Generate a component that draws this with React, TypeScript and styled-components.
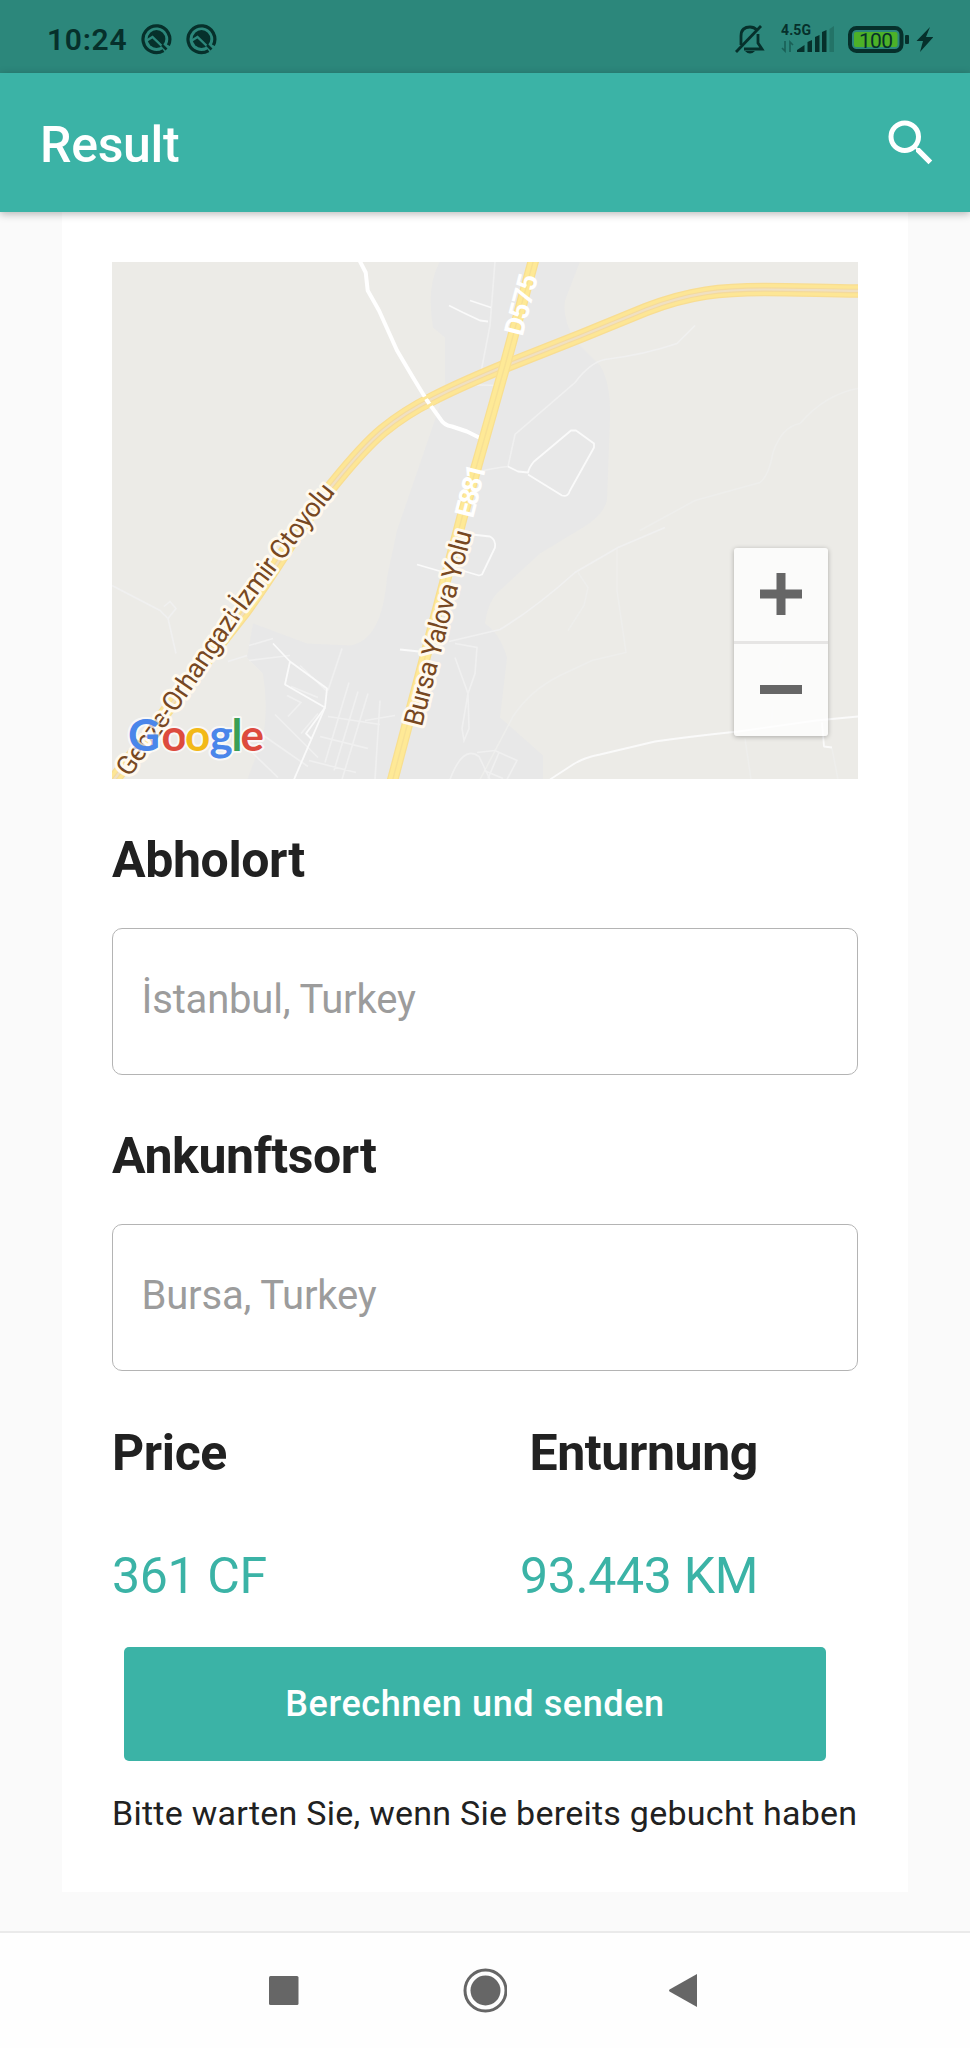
import React from 'react';
import styled, { createGlobalStyle } from 'styled-components';
import { MdSearch } from 'react-icons/md';

const Global = createGlobalStyle`
  * { box-sizing: border-box; }
  body { margin: 0; background: #fafafa; font-family: Roboto, sans-serif; color: #212121; }
`;

const Screen = styled.div`
  width: 970px;
  height: 2048px;
  display: flex;
  flex-direction: column;
  background: #fafafa;
  overflow: hidden;
`;

const StatusBar = styled.header`
  height: 73px;
  flex: none;
  display: flex;
  align-items: center;
  justify-content: space-between;
  padding: 5px 37px 0 47px;
  background: #2c877b;
  color: #06302b;
`;

const StatusGroup = styled.div`
  display: flex;
  align-items: center;
`;

const Clock = styled.span`
  width: 94px;
  font-size: 30px;
  font-weight: 600;
  line-height: 36px;
  letter-spacing: 0.7px;
  padding-top: 2px;
`;

const AppBar = styled.div`
  height: 139px;
  flex: none;
  display: flex;
  align-items: center;
  justify-content: space-between;
  padding: 0 29px 0 40px;
  background: #3bb3a6;
  box-shadow: 0 2px 8px rgba(0, 0, 0, 0.28);
  position: relative;
  z-index: 1;
`;

const Title = styled.h1`
  margin: 5px 0 0;
  color: #fff;
  font-size: 50px;
  font-weight: 500;
  line-height: 60px;
  letter-spacing: -0.3px;
`;

const SearchButton = styled.button`
  width: 60px;
  height: 60px;
  padding: 0;
  border: 0;
  background: none;
  color: #fff;
  font-size: 60px;
  line-height: 0;
`;

const Content = styled.main`
  flex: 1;
  padding: 0 62px 0 62px;
`;

const Card = styled.section`
  height: 1680px;
  padding: 49.5px 50px 0;
  background: #fff;
  display: flex;
  flex-direction: column;
`;

const MapFrame = styled.div`
  position: relative;
  height: 517.5px;
  flex: none;
  overflow: hidden;
`;

const ZoomControl = styled.div`
  position: absolute;
  right: 30px;
  bottom: 43px;
  width: 94px;
  height: 188px;
  display: flex;
  flex-direction: column;
  border-radius: 3px;
  background: rgba(255, 255, 255, 0.78);
  box-shadow: 0 1px 5px rgba(0, 0, 0, 0.28);
`;

const ZoomButton = styled.button`
  flex: 1;
  display: flex;
  align-items: center;
  justify-content: center;
  padding: 0;
  border: 0;
  background: none;
  & + & { border-top: 3px solid #e6e5e4; }
`;

const Heading = styled.h2`
  margin: 0;
  font-size: 50px;
  font-weight: 700;
  line-height: 60px;
  letter-spacing: -0.38px;
`;

const Field = styled.label`
  display: flex;
  flex-direction: column;
  gap: 38px;
  margin-top: 51px;
`;

const FieldBox = styled.div`
  height: 147px;
  padding: 47px 28.5px 0;
  border: 1.5px solid #b4b4b4;
  border-radius: 10px;
  font-size: 40px;
  line-height: 48px;
  letter-spacing: -0.18px;
  color: #9c9c9c;
`;

const Summary = styled.div`
  display: flex;
  justify-content: space-between;
  margin-top: 52px;
  padding-right: 100px;
`;

const Metric = styled.div<{ $end?: boolean }>`
  display: flex;
  flex-direction: column;
  gap: 63px;
  align-items: ${(p) => (p.$end ? 'flex-end' : 'flex-start')};
`;

const MetricValue = styled.span`
  font-size: 50px;
  line-height: 60px;
  color: #3bb3a6;
  letter-spacing: -0.35px;
`;

const SubmitButton = styled.button`
  width: 702px;
  height: 114px;
  margin: 41px 0 0 12px;
  flex: none;
  border: 0;
  border-radius: 5px;
  background: #3bb3a6;
  color: #fff;
  font-family: inherit;
  font-size: 36px;
  font-weight: 500;
  letter-spacing: 0.6px;
`;

const Note = styled.p`
  margin: 31px 0 0;
  font-size: 34px;
  line-height: 42px;
  white-space: nowrap;
  letter-spacing: 0.26px;
`;

const NavBar = styled.nav`
  height: 117px;
  flex: none;
  display: flex;
  justify-content: center;
  align-items: center;
  gap: 158px;
  padding-bottom: 2px;
  border-top: 2px solid #eaeaea;
  background: #fefefe;
`;

const halo = { paintOrder: 'stroke', strokeLinejoin: 'round' } as const;

const MOTORWAY =
  'M108 787 L172 703 L243 613 C280 563 300 522 333 484 C350 463 366 444 383 430 C400 416 417 406 433 398 C458 385 480 376 504 366 L580 336 L646 309 C690 292 722 289 765 289 C795 289 820 290 860 290.5';
const HIGHWAY = 'M534 258 L505 365 L483 443 L462 517 L392 782';

const MINOR = [
  'M449 305 L463 312 L480 320 L488 321',
  'M470 300 L491 307',
  'M508 466 L518 471 L528 472 Q529 467 534 461 L571 430 L576 430 L594 443 L594 447 L570 490 Q568 497 562 495 L528 474',
  'M472 534 L490 536 Q496 539 495 547 L482 574 L479 575 L462 570',
  'M417 564 L441 571',
  'M400 649 L419 651',
  'M290 661 L327 688 L325 707 L285 684 L290 661 L273 643',
  'M325 707 L306 733 L312 739',
  'M325 707 L294 779',
  'M550 779 L573 764 Q584 757 600 754 L655 741 Q690 736 738 731 L816 720 L858 716',
  'M822 722 L824 746 L832 747',
];

const FAINT = [
  'M495 261 L490 325 L479 382',
  'M480 471 Q491 468 508 466 L515 434 L575 382 Q590 362 605 359 Q645 354 677 343 L695 325',
  'M464 384 L498 385',
  'M112 585 L160 610 L168 618 L176 608 L170 601 L164 606 M168 618 L176 653',
  'M228 661 L247 655 M249 645 L273 638 M249 660 L290 655',
  'M300 665 L326 690 M291 686 L318 697 M287 695 L301 702 L288 716 M318 713 L301 733 M275 714 L318 757 M262 734 L308 766 M251 751 L278 777',
  'M349 682 L325 762 M358 691 L334 770 M368 693 L342 779 M342 648 L328 690 M328 716 L380 724 M320 736 L368 748 M309 760 L356 772 M380 700 L375 779 M365 720 L395 715',
  'M455 643 L477 647 L475 673 L468 693 L455 657 M468 693 L469 728 L464 740 L462 728 L468 693 M449 641 L500 629 Q535 608 575 572 L618 547 L665 527',
  'M477 752 L495 750 L517 760 L507 779 M484 770 L503 778 M499 752 L488 778',
  'M450 779 Q463 744 479 756 L490 779',
];

const FAINTEST = [
  'M578 572 L588 587 L584 605 L568 630',
  'M617 547 L617 590 L626 652 L592 660 L560 675 Q530 690 513 716 L480 779',
  'M640 530 L695 500 L760 482 Q769 475 773 452 Q782 426 800 423 Q825 394 858 388',
  'M786 653 L779 665 L783 680 M773 705 L771 728 M745 738 L751 779 M832 748 L838 779',
];

function RouteMap() {
  return (
    <svg width="746" height="517.5" viewBox="112 261.5 746 517.5" fill="none" fontFamily="Roboto, sans-serif">
      <defs>
        <path id="motorwayLabel" d="M129.5 777.5 L182 703.5 L243 614 L278 567 Q301 535 342 484" />
        <path id="highwayLabel" d="M421.7 727 L474 525" />
        <path id="d575" d="M522.5 336.5 L542 262" />
        <path id="e881" d="M473 518.5 L492 445" />
      </defs>
      <path d="M112 261H858V780H112Z" fill="#ecebe7" />
      <path
        fill="#e8e8e8"
        d="M440 261 Q426 285 433 327 L445 337 V390 L420 463 L397 530 L387 577 Q382 640 350 645 L307 643 L253 623 L247 657 L263 673 Q269 710 262 740 L247 780 H543 V755 L500 717 L507 657 Q500 633 485 623 Q488 600 500 590 L540 553 L583 527 Q603 515 607 500 L610 417 Q611 383 600 365 L575 340 Q562 318 565 300 L580 261Z"
      />
      <g stroke="#eeeeec" strokeWidth="1.5">
        {FAINTEST.map((d) => <path key={d} d={d} />)}
      </g>
      <g stroke="#f0f0f0" strokeWidth="1.6">
        {FAINT.map((d) => <path key={d} d={d} />)}
      </g>
      <g stroke="#fafafa" strokeWidth="1.8" strokeLinejoin="round">
        {MINOR.map((d) => <path key={d} d={d} />)}
      </g>
      <path d={MOTORWAY} stroke="#f8dd92" strokeWidth="13.5" />
      <path d={MOTORWAY} stroke="#fde695" strokeWidth="11" />
      <path d={MOTORWAY} stroke="#f4da9c" strokeWidth="4.4" />
      <path d={MOTORWAY} stroke="#f0e0c2" strokeWidth="2.2" />
      <path
        d="M359 259 L365.7 272 L367.7 290 L379 310 L397 350 L413 377 L427 400 L440 418 Q444 425 452 426 L467 431 L481 438"
        stroke="#fff" strokeWidth="4" strokeLinejoin="round"
      />
      <path d="M420 400 L434 393 M424 408 L438 400" stroke="#fde695" strokeWidth="3" />
      <path d={HIGHWAY} stroke="#f8df90" strokeWidth="11.5" />
      <path d={HIGHWAY} stroke="#fee996" strokeWidth="9" />
      <path d={HIGHWAY} stroke="#f7e094" strokeWidth="1.4" />
      <g fill="#fff" fontSize="27.5" fontWeight="700">
        <text><textPath href="#d575" textLength="62">D575</textPath></text>
        <text><textPath href="#e881" textLength="54">E881</textPath></text>
      </g>
      <g fill="#774822" stroke="#fff9ee" strokeWidth="6" fontSize="27" style={halo}>
        <text><textPath href="#motorwayLabel" textLength="353">Gebze-Orhangazi-İzmir Otoyolu</textPath></text>
        <text><textPath href="#highwayLabel" textLength="201">Bursa Yalova Yolu</textPath></text>
      </g>
      <g fontFamily="Lato, sans-serif" fontWeight="700" fontSize="44" stroke="#fff" strokeOpacity="0.7" strokeWidth="4" style={halo}>
        <text y="750.5">
          <tspan x="128" fill="#4a86ea">G</tspan>
          <tspan x="161.5" fill="#dd4b3e">o</tspan>
          <tspan x="185" fill="#f2b918">o</tspan>
          <tspan x="209.5" fill="#4a86ea">g</tspan>
          <tspan x="231.5" fill="#3a9f55">l</tspan>
          <tspan x="240.5" fill="#dd4b3e">e</tspan>
        </text>
      </g>
    </svg>
  );
}

function AppBadge() {
  return (
    <svg width="45" height="32" viewBox="0 0 45 32" fill="none">
      <path d="M22.5 27.6 A13.4 13.4 0 1 1 27.4 22.2" stroke="#06302b" strokeWidth="3.2" />
      <circle cx="15.5" cy="16" r="8.9" fill="#06302b" />
      <path d="M5 18 L11.5 14 L26 28" stroke="#2c877b" strokeWidth="2.4" />
      <path d="M21 22 L25.5 26.5" stroke="#06302b" strokeWidth="2.6" />
    </svg>
  );
}

function StatusIcons() {
  return (
    <svg width="200" height="34" viewBox="733 22 200 34" fill="none" fontFamily="Roboto, sans-serif">
      <g stroke="#06302b" strokeWidth="2.8">
        <path d="M736 52 L761 26" />
        <path d="M741 45 V36 C741 29 745 27 750 27 C753 27 755 28 757 30 M758 34 V43 L762 49 H744" />
      </g>
      <path d="M745 51 H755 Q750 56 745 51Z" fill="#06302b" />
      <text x="781" y="35" fontSize="14" fontWeight="700" fill="#06302b" textLength="30">4.5G</text>
      <path d="M785 41 V51 L782 48 M790 52 V42 L793 45" stroke="#1a6057" strokeWidth="1.6" />
      <path d="M797 52 V50 L804.5 45 V52Z M807.5 42 L812 40 V52 H807.5Z M815 37 L819.5 35 V52 H815Z M822 32 L826.5 30 V52 H822Z" fill="#06302b" />
      <path d="M829.5 29 L834 26 V52 H829.5Z" fill="#237367" />
      <rect x="850" y="28" width="51.5" height="23" rx="6.5" stroke="#06302b" strokeWidth="4" />
      <rect x="854" y="32" width="43.5" height="15" rx="2" fill="#4cb128" />
      <text x="859" y="47.5" fontSize="21" fontWeight="400" fill="#06302b" textLength="34">100</text>
      <rect x="905" y="35" width="4" height="9" rx="1" fill="#06302b" />
      <path d="M930 27 L916.5 41 H923 L920 52 L933.5 37 H926Z" fill="#06302b" />
    </svg>
  );
}

export default function App() {
  return (
    <Screen>
      <Global />
      <StatusBar>
        <StatusGroup>
          <Clock>10:24</Clock>
          <AppBadge />
          <AppBadge />
        </StatusGroup>
        <StatusIcons />
      </StatusBar>
      <AppBar>
        <Title>Result</Title>
        <SearchButton aria-label="Search"><MdSearch /></SearchButton>
      </AppBar>
      <Content>
        <Card>
          <MapFrame>
            <RouteMap />
            <ZoomControl>
              <ZoomButton aria-label="Zoom in">
                <svg width="42" height="42"><path d="M0 16.5H16.5V0H25.5V16.5H42V25.5H25.5V42H16.5V25.5H0Z" fill="#666" /></svg>
              </ZoomButton>
              <ZoomButton aria-label="Zoom out">
                <svg width="42" height="9"><rect width="42" height="9" fill="#666" /></svg>
              </ZoomButton>
            </ZoomControl>
          </MapFrame>
          <Field>
            <Heading>Abholort</Heading>
            <FieldBox>İstanbul, Turkey</FieldBox>
          </Field>
          <Field>
            <Heading>Ankunftsort</Heading>
            <FieldBox>Bursa, Turkey</FieldBox>
          </Field>
          <Summary>
            <Metric>
              <Heading>Price</Heading>
              <MetricValue>361 CF</MetricValue>
            </Metric>
            <Metric $end>
              <Heading>Enturnung</Heading>
              <MetricValue>93.443 KM</MetricValue>
            </Metric>
          </Summary>
          <SubmitButton>Berechnen und senden</SubmitButton>
          <Note>Bitte warten Sie, wenn Sie bereits gebucht haben</Note>
        </Card>
      </Content>
      <NavBar>
        <svg width="44" height="46"><rect x="8" y="9" width="29.5" height="29" rx="1.5" fill="#666" /></svg>
        <svg width="44" height="46" fill="none">
          <circle cx="22.5" cy="23.5" r="20.5" stroke="#666" strokeWidth="3" />
          <circle cx="22.5" cy="23.5" r="15" fill="#666" />
        </svg>
        <svg width="44" height="46"><path d="M32 7 V40 L4.5 24.5 Q3.5 23.5 4.5 22.5Z" fill="#666" /></svg>
      </NavBar>
    </Screen>
  );
}
